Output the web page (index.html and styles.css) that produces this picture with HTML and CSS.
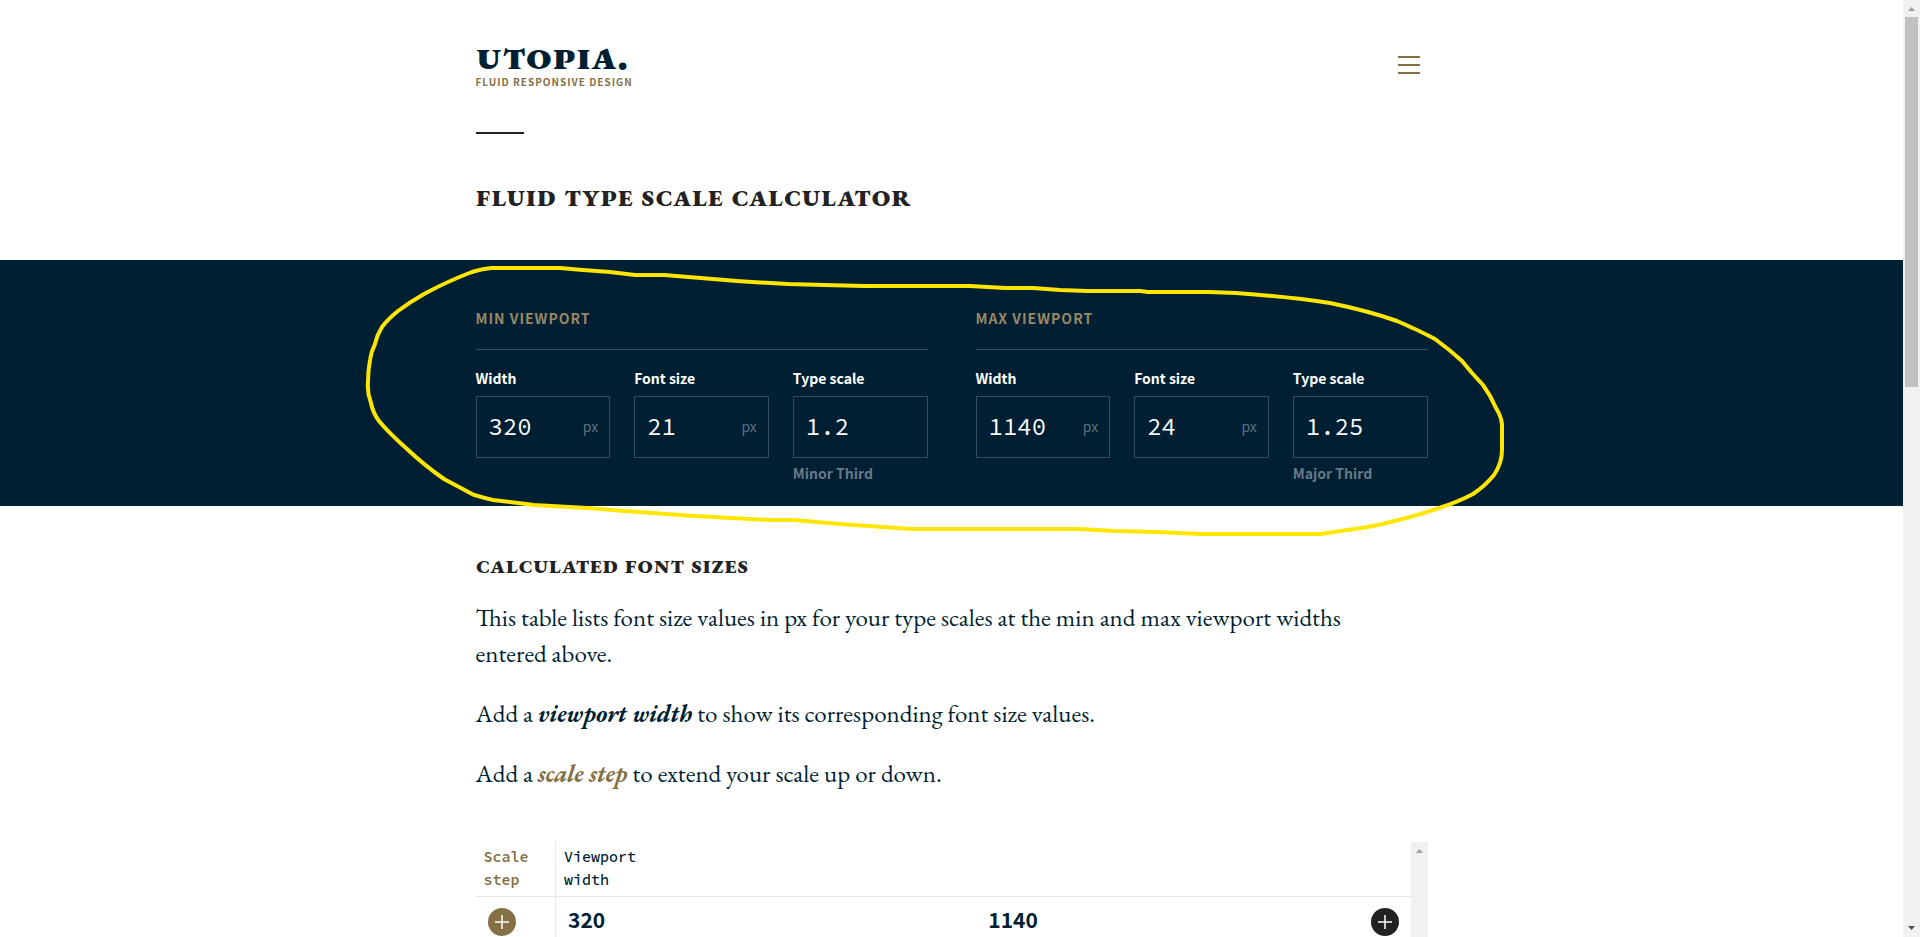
FILE: index.html
```html
<!DOCTYPE html>
<html lang="en">
<head>
<meta charset="utf-8">
<title>Fluid type scale calculator | Utopia</title>
<link rel="stylesheet" href="styles.css">
</head>
<body class="window">
<div class="page">
  <header class="site-header wrap">
    <a class="logo" href="#">
      <span class="logo-name">UTOPIA.</span>
      <span class="logo-tagline">FLUID RESPONSIVE DESIGN</span>
    </a>
    <button class="menu-button" type="button" aria-label="Menu">
      <svg width="22" height="18" viewBox="0 0 22 18" aria-hidden="true"><path d="M0 1h22M0 9h22M0 17h22" stroke="currentColor" stroke-width="2"/></svg>
    </button>
  </header>
  <div class="wrap title-block">
    <h1 class="title">FLUID TYPE SCALE CALCULATOR</h1>
  </div>

  <form class="band">
    <div class="wrap viewports">
      <fieldset class="viewport">
        <legend class="viewport-title">MIN VIEWPORT</legend>
        <div class="fields">
          <div class="field">
            <label class="label" for="min-width">Width</label>
            <div class="box"><input class="input" id="min-width" type="text" value="320"><span class="unit">px</span></div>
          </div>
          <div class="field">
            <label class="label" for="min-size">Font size</label>
            <div class="box"><input class="input" id="min-size" type="text" value="21"><span class="unit">px</span></div>
          </div>
          <div class="field">
            <label class="label" for="min-scale">Type scale</label>
            <div class="box"><input class="input" id="min-scale" type="text" value="1.2"></div>
            <span class="hint">Minor Third</span>
          </div>
        </div>
      </fieldset>
      <fieldset class="viewport">
        <legend class="viewport-title">MAX VIEWPORT</legend>
        <div class="fields">
          <div class="field">
            <label class="label" for="max-width">Width</label>
            <div class="box"><input class="input" id="max-width" type="text" value="1140"><span class="unit">px</span></div>
          </div>
          <div class="field">
            <label class="label" for="max-size">Font size</label>
            <div class="box"><input class="input" id="max-size" type="text" value="24"><span class="unit">px</span></div>
          </div>
          <div class="field">
            <label class="label" for="max-scale">Type scale</label>
            <div class="box"><input class="input" id="max-scale" type="text" value="1.25"></div>
            <span class="hint">Major Third</span>
          </div>
        </div>
      </fieldset>
    </div>
    <svg class="marker" width="1144" height="276" viewBox="363 262 1144 276" aria-hidden="true">
      <path d="M491 268L560 268L583 270L610 272L635 275L664 275L725 280L737 281L752 282L788 284L824 285L865 286L970 286L1005 288L1033 288L1060 290L1087 291L1140 291L1148 292L1209 292L1236 293Q1290 297 1330 303Q1369 311 1397 321Q1418 330 1435 339Q1450 350 1462 361L1472 373L1483 385Q1491 396 1496 408Q1501 416 1502 424L1502 450Q1502 463 1494 475Q1485 486 1473 494Q1458 502 1439 508Q1407 519 1368 527L1320 534L1201 534L1156 532L1114 531L1079 529L912 529L840 524L794 520L771 520L694 516L625 511L587 508L534 505L493 500Q484 498 474 495L444 479Q424 465 407 449Q389 433 379 421Q373 413 371 403Q367 393 368 382Q368 371 370 360Q371 352 375 344Q377 335 382 327Q388 319 398 311Q410 302 424 294Q448 281 472 272Q482 269 491 268Z"/>
    </svg>
  </form>

  <main class="wrap results">
    <h2 class="subtitle">CALCULATED FONT SIZES</h2>
    <p class="text"><span class="ligature">Th</span>is table lists font size values in px for your type scales at the min and max viewport widths entered above.</p>
    <p class="text">Add a <strong class="term">viewport width</strong> to show its corresponding font size values.</p>
    <p class="text">Add a <strong class="term term-gold">scale step</strong> to extend your scale up or down.</p>

    <div class="table-scroller">
      <div class="table-area">
        <table class="scale">
          <colgroup><col class="col-step"><col class="col-value"><col><col class="col-add"></colgroup>
          <thead>
            <tr>
              <th class="head head-step" scope="col">Scale<br>step</th>
              <th class="head" scope="col" colspan="3">Viewport<br>width</th>
            </tr>
          </thead>
          <tbody>
            <tr>
              <td class="cell cell-step"><button class="add add-gold" type="button" aria-label="Add scale step"><svg width="28" height="28" viewBox="0 0 28 28" aria-hidden="true"><path d="M7 14h14M14 7v14" stroke="currentColor" stroke-width="1.500"/></svg></button></td>
              <td class="cell cell-value">320</td>
              <td class="cell cell-value">1140</td>
              <td class="cell cell-add"><button class="add" type="button" aria-label="Add viewport width"><svg width="28" height="28" viewBox="0 0 28 28" aria-hidden="true"><path d="M7 14h14M14 7v14" stroke="currentColor" stroke-width="1.500"/></svg></button></td>
            </tr>
          </tbody>
        </table>
      </div>
      <div class="scrollbar" aria-hidden="true">
        <svg width="17" height="17" viewBox="0 0 17 17"><path d="M5 11L8.500 7L12 11Z" fill="#a0a0a0"/></svg>
      </div>
    </div>
  </main>
</div>
<div class="scrollbar window-scrollbar" aria-hidden="true">
  <svg width="17" height="17" viewBox="0 0 17 17"><path d="M5 11L8.500 7L12 11Z" fill="#a0a0a0"/></svg>
  <div class="track"><div class="thumb"></div></div>
  <svg width="17" height="17" viewBox="0 0 17 17"><path d="M5 6L8.500 10L12 6Z" fill="#505050"/></svg>
</div>
</body>
</html>
```
FILE: styles.css
```css
:root {
  --navy: #001f33;
  --gold: #857046;
  --ink: #222;
  --line: #334c5c;
  --rule: #e5e7e9;
  --serif: "EB Garamond", "Liberation Serif", serif;
  --sans: "Noto Sans CJK JP", "Noto Sans", sans-serif;
  --mono: "Source Code Pro", "Liberation Mono", monospace;
}

* { box-sizing: border-box; }

.window {
  display: flex;
  height: 100vh;
  margin: 0;
  overflow: hidden;
  background: #fff;
  color: var(--navy);
  font-family: var(--serif);
}

.page { flex: 1; min-width: 0; overflow: hidden; }
.wrap { width: 100%; max-width: 952px; margin: 0 auto; }

.site-header {
  display: flex;
  justify-content: space-between;
  align-items: flex-start;
  padding-top: 44px;
}
.logo { display: flex; flex-direction: column; gap: 8px; color: var(--navy); text-decoration: none; }
.logo-name {
  font-size: 43px;
  line-height: 20px;
  font-weight: 800;
  font-variant-caps: all-small-caps;
}
.logo-tagline { color: var(--gold); font: 700 10px/20px var(--sans); letter-spacing: 1px; }
.menu-button {
  display: flex;
  padding: 12px 8px;
  border: 0;
  background: none;
  color: var(--gold);
}

.title-block { padding: 40px 0 46px; }
.title-block::before { content: ""; display: block; width: 48px; height: 2px; background: var(--ink); }
.title {
  margin: 42px 0 0;
  color: var(--ink);
  font-size: 32px;
  line-height: 38px;
  font-variant-caps: all-small-caps;
}

.band { position: relative; margin: 0; padding: 46px 0 21px; background: var(--navy); color: #fff; font-family: var(--sans); }
.viewports { display: grid; grid-template-columns: 1fr 1fr; gap: 48px; }
.viewport { min-width: 0; margin: 0; padding: 0; border: 0; }
.viewport-title {
  width: 100%;
  padding: 0 0 19px;
  border-bottom: 1px solid var(--line);
  color: #998866;
  font-size: 14px;
  line-height: 24px;
  font-weight: 700;
  letter-spacing: 1px;
}
.fields { display: grid; grid-template-columns: repeat(3, 1fr); gap: 24px; padding-top: 16px; }
.field { display: flex; flex-direction: column; min-width: 0; }
.label { font-size: 14px; line-height: 24px; font-weight: 700; padding-bottom: 6px; }
.box { display: flex; align-items: center; height: 62px; padding: 0 11px 0 12px; border: 1px solid var(--line); }
.input {
  flex: 1;
  min-width: 0;
  width: 100%;
  padding: 0;
  border: 0;
  background: none;
  color: #fff;
  font: 24px/32px var(--mono);
}
.unit { padding-bottom: 2px; color: #5c7080; font-size: 14px; line-height: 24px; }
.hint { padding-top: 3px; color: #667986; font-size: 14px; line-height: 24px; font-weight: 700; }

.marker { position: absolute; left: calc(50% - 589px); top: 2px; pointer-events: none; }
.marker path { fill: none; stroke: #ffe600; stroke-width: 4; stroke-linejoin: round; }

.results { padding-top: 44px; }
.subtitle {
  margin: 0 0 21px;
  color: var(--ink);
  font-size: 26px;
  line-height: 28px;
  font-variant-caps: all-small-caps;
}
.text { max-width: 920px; margin: 0 0 24px; font-size: 25px; line-height: 36px; }
.ligature { font-variant-ligatures: discretionary-ligatures; }
.term { font-size: 24px; line-height: 24px; font-style: italic; }
.term-gold { color: var(--gold); }

.table-scroller { display: flex; height: 400px; margin-top: 51px; }
.table-area { flex: 1; min-width: 0; }
.scale { width: 100%; border-collapse: collapse; table-layout: fixed; }
.col-step { width: 80px; }
.col-value { width: 45%; }
.col-add { width: 64px; }
.head {
  padding: 3px 8px 5px;
  border-bottom: 1px solid var(--rule);
  font: 500 15px/23px var(--mono);
  text-align: left;
}
.head-step { border-right: 1px solid var(--rule); color: var(--gold); font-weight: 600; }
.cell { height: 50px; padding: 0 12px; font: 700 21px/28px var(--sans); }
.cell-value { padding-top: 8px; vertical-align: top; }
.cell-step { border-right: 1px solid var(--rule); }
.cell-add { text-align: right; }
.add {
  display: flex;
  width: 28px;
  height: 28px;
  padding: 0;
  border: 0;
  border-radius: 50%;
  background: var(--ink);
  color: #fff;
}
.add-gold { background: var(--gold); }
.cell-add .add { margin-left: auto; }

.scrollbar { display: flex; flex-direction: column; flex: none; width: 17px; background: #f1f1f1; }
.window-scrollbar { height: 100%; }
.track { flex: 1; padding: 0 2px; }
.thumb { height: 41%; background: #c1c1c1; }
```
